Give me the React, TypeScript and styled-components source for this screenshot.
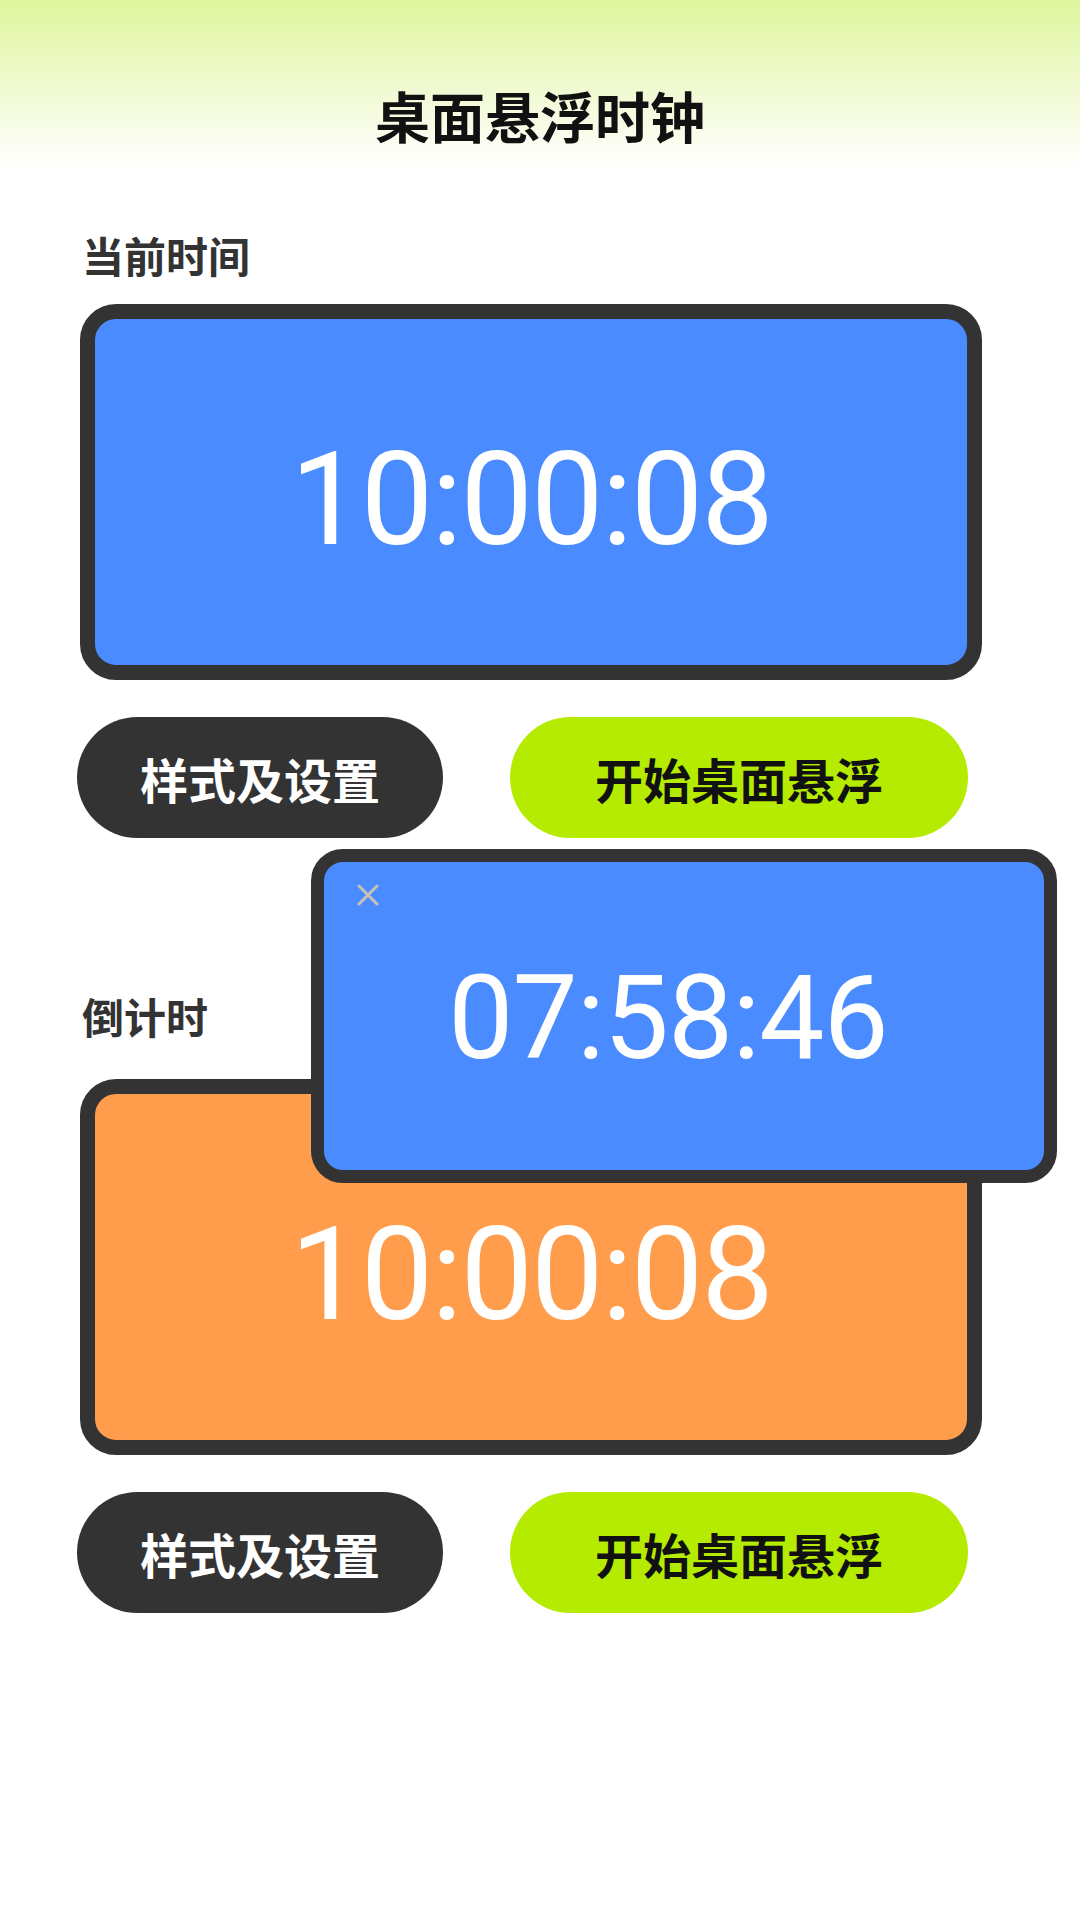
import styled, { createGlobalStyle } from 'styled-components';

const GlobalStyle = createGlobalStyle`
	html, body {
		margin: 0;
		padding: 0;
		background: #ffffff;
	}
	body {
		font-family: 'Noto Sans CJK SC', 'Noto Sans', sans-serif;
	}
`;

const Page = styled.div`
	position: relative;
	width: 1080px;
	min-height: 1920px;
	background: #ffffff;
	overflow: hidden;
`;

const Header = styled.header`
	height: 170px;
	padding-top: 82px;
	box-sizing: border-box;
	background: linear-gradient(to bottom, #dff59c 0%, #eef9cb 45%, #ffffff 100%);
	text-align: center;
`;

const Title = styled.h1`
	margin: 0;
	font-size: 55px;
	line-height: 64px;
	font-weight: 700;
	color: #111111;
`;

const Content = styled.main`
	width: 902px;
	margin-left: 80px;
	display: flex;
	flex-direction: column;
`;

const Label = styled.h2<{ $top: number; $gap: number }>`
	margin: ${(p) => p.$top}px 0 ${(p) => p.$gap}px 2px;
	font-size: 42px;
	line-height: 48px;
	font-weight: 700;
	color: #333333;
`;

const ClockCard = styled.div<{ $color: string }>`
	height: 376px;
	box-sizing: border-box;
	border: 15px solid #333333;
	border-radius: 36px;
	background: ${(p) => p.$color};
	display: flex;
	align-items: center;
	justify-content: center;
	padding-top: 14px;
`;

const ClockText = styled.span`
	font-family: Roboto, 'Noto Sans', sans-serif;
	font-weight: 400;
	font-size: 129px;
	line-height: 1;
	letter-spacing: -2px;
	color: #ffffff;
`;

const ButtonRow = styled.div`
	display: flex;
	align-items: center;
	margin-top: 37px;
	margin-left: -3px;
	gap: 67px;
`;

const PillButton = styled.button<{ $variant: 'dark' | 'lime' }>`
	height: 121px;
	width: ${(p) => (p.$variant === 'dark' ? 366 : 458)}px;
	border: none;
	border-radius: 61px;
	background: ${(p) => (p.$variant === 'dark' ? '#333333' : '#b5eb00')};
	color: ${(p) => (p.$variant === 'dark' ? '#ffffff' : '#111111')};
	font-family: 'Noto Sans CJK SC', 'Noto Sans', sans-serif;
	font-size: 48px;
	font-weight: 700;
	padding: 0;
	cursor: pointer;
`;

const FloatWindow = styled.div`
	position: absolute;
	left: 311px;
	top: 849px;
	width: 746px;
	height: 334px;
	box-sizing: border-box;
	border: 13px solid #333333;
	border-radius: 32px;
	background: #4a8cff;
	display: flex;
	align-items: center;
	justify-content: center;
	padding: 4px 32px 0 0;
	z-index: 5;
`;

const CloseButton = styled.button`
	position: absolute;
	left: 33px;
	top: 22px;
	width: 22px;
	height: 22px;
	padding: 0;
	border: none;
	background: transparent;
	display: flex;
`;

const FloatText = styled.span`
	font-family: Roboto, 'Noto Sans', sans-serif;
	font-weight: 400;
	font-size: 116px;
	line-height: 1;
	letter-spacing: -1px;
	color: #ffffff;
`;

type ClockSectionProps = {
	label: string;
	time: string;
	color: string;
	top: number;
	gap: number;
};

function ClockSection({ label, time, color, top, gap }: ClockSectionProps) {
	return (
		<>
			<Label $top={top} $gap={gap}>
				{label}
			</Label>
			<ClockCard $color={color}>
				<ClockText>{time}</ClockText>
			</ClockCard>
			<ButtonRow>
				<PillButton $variant='dark'>样式及设置</PillButton>
				<PillButton $variant='lime'>开始桌面悬浮</PillButton>
			</ButtonRow>
		</>
	);
}

export default function App() {
	return (
		<Page>
			<GlobalStyle />
			<Header>
				<Title>桌面悬浮时钟</Title>
			</Header>
			<Content>
				<ClockSection label='当前时间' time='10:00:08' color='#4a8cff' top={61} gap={25} />
				<ClockSection label='倒计时' time='10:00:08' color='#ff9d4c' top={154} gap={39} />
			</Content>
			<FloatWindow>
				<CloseButton aria-label='close'>
					<svg width='22' height='22' viewBox='0 0 22 22'>
						<path d='M2 2 L20 20 M20 2 L2 20' stroke='#c8c2b6' strokeWidth='3' strokeLinecap='round' />
					</svg>
				</CloseButton>
				<FloatText>07:58:46</FloatText>
			</FloatWindow>
		</Page>
	);
}
